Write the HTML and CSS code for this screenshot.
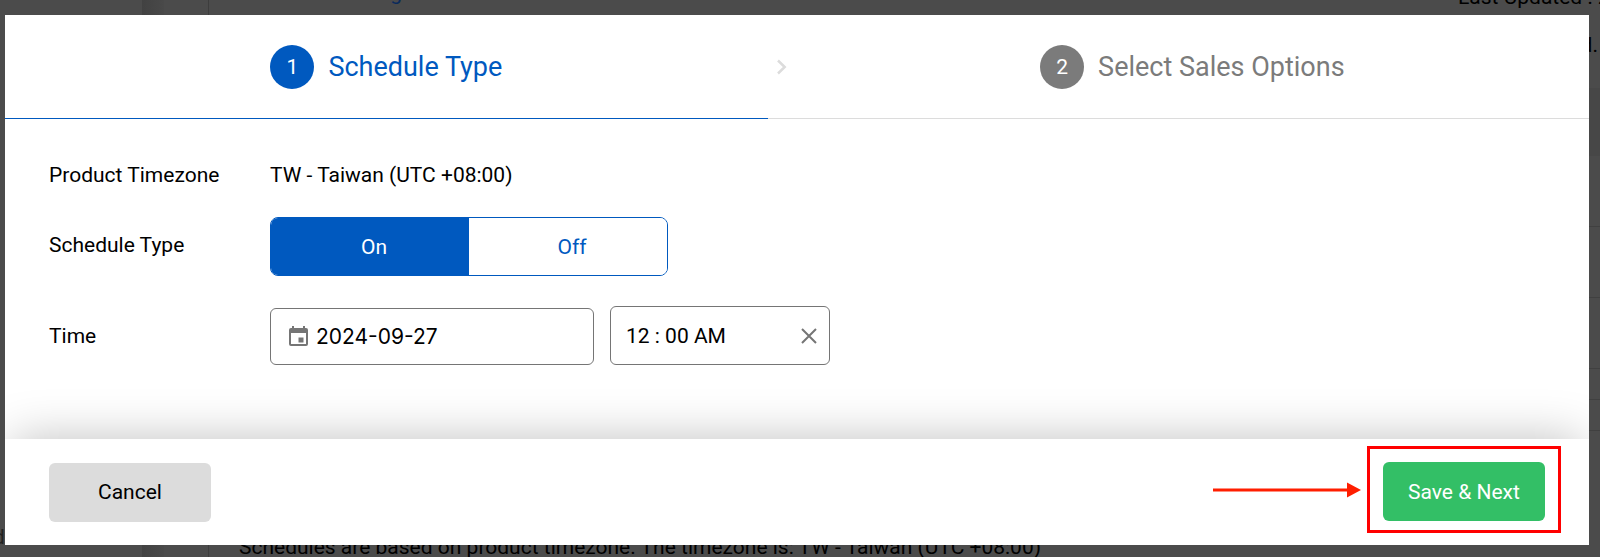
FILE: index.html
```
<!DOCTYPE html>
<html lang="en">
<head>
    <meta charset="UTF-8">
    <meta name="viewport" content="width=device-width, initial-scale=1.0">
    <title>Schedule</title>
    <link rel="stylesheet" href="styles.css">
</head>
<body>
    <!-- Page behind the dialog -->
    <div class="page" aria-hidden="true">
        <div class="sidebar"><span>d</span></div>
        <div class="gutter"></div>
        <div class="content">
            <div class="content-head">
                <span class="page-link">Pricing</span>
                <span class="updated">Last Updated : 2024</span>
            </div>
            <p class="notice">d.</p>
            <div class="rows">
                <div class="head-row"></div>
                <div class="tall-row"></div>
                <div class="tall-row"></div>
                <div class="tall-row"></div>
                <div class="short-row"></div>
                <div class="short-row"></div>
            </div>
            <p class="hint">Schedules are based on product timezone. The timezone is: TW - Taiwan (UTC +08:00)</p>
        </div>
    </div>

    <div class="overlay">
        <form class="modal" role="dialog" aria-label="Schedule">
            <!-- Steps -->
            <div class="steps">
                <div class="step active">
                    <span class="number">1</span>
                    <span>Schedule Type</span>
                </div>
                <div class="separator">
                    <svg width="10" height="16" viewBox="0 0 10 16" fill="none" stroke="#dcdcdc" stroke-width="2.500"><path d="M1 1.500 7.700 8 1 14.500"/></svg>
                </div>
                <div class="step">
                    <span class="number">2</span>
                    <span>Select Sales Options</span>
                </div>
            </div>

            <!-- Fields -->
            <div class="fields">
                <span>Product Timezone</span>
                <span>TW - Taiwan (UTC +08:00)</span>

                <span id="typeLabel" class="type-label">Schedule Type</span>
                <div class="toggle" role="group" aria-labelledby="typeLabel">
                    <button type="button" class="selected" aria-pressed="true">On</button>
                    <button type="button" aria-pressed="false">Off</button>
                </div>

                <label for="date">Time</label>
                <div class="time-fields">
                    <div class="date-box">
                        <svg width="19" height="21" viewBox="0 0 19 21" fill="#757575"><path fill-rule="evenodd" d="M3 0h2v2h9V0h2v2h1a2 2 0 0 1 2 2v14a2 2 0 0 1-2 2H2a2 2 0 0 1-2-2V4a2 2 0 0 1 2-2h1zM2 7v11h15V7z"/><path d="M9.500 11.500h5v5h-5z"/></svg>
                        <input type="text" id="date" value="2024-09-27">
                    </div>
                    <div class="time-box">
                        <input type="text" id="time" aria-label="Time of day" value="12 : 00 AM">
                        <button type="button" class="clear" aria-label="Clear time">
                            <svg width="16" height="16" viewBox="0 0 16 16" stroke="#757575" stroke-width="2"><path d="M1 1 15 15M15 1 1 15"/></svg>
                        </button>
                    </div>
                </div>
            </div>

            <!-- Actions -->
            <div class="footer">
                <button type="button" class="button cancel">Cancel</button>
                <div class="pointer">
                    <svg width="148" height="16" viewBox="0 0 148 16" fill="#ff1e00"><path d="M0 6.500h134V0.500l14 7.500-14 7.500V9.500H0z"/></svg>
                    <div class="highlight">
                        <button type="submit" class="button save">Save &amp; Next</button>
                    </div>
                </div>
            </div>
        </form>
    </div>
</body>
</html>
```
FILE: styles.css
```
* {
    box-sizing: border-box;
}

body {
    margin: 0;
    height: 100vh;
    overflow: hidden;
    font-family: Roboto, Arial, sans-serif;
    font-size: 21px;
    line-height: 24px;
    color: #000;
}

button,
input {
    font: inherit;
    color: inherit;
}

p {
    margin: 0;
}

/* Page behind the dialog */
.page {
    display: flex;
    height: 100vh;
    background-color: #4b4b4b;
}

.sidebar {
    display: flex;
    align-items: flex-end;
    justify-content: flex-start;
    width: 142px;
    padding-bottom: 8px;
    color: #222;
}

.sidebar span {
    margin-left: -7px;
}

.gutter {
    width: 22px;
    background: linear-gradient(to right, #424242, #494949);
}

.content {
    flex: 1;
    min-width: 0;
    display: flex;
    flex-direction: column;
    margin-left: 44px;
    border-left: 1px solid #3d3d3d;
}

.content-head {
    display: flex;
    align-items: flex-end;
    justify-content: space-between;
    height: 24px;
    margin-top: -15px;
    padding-left: 128px;
    white-space: nowrap;
}

.updated {
    flex: 0 0 142px;
    min-width: 0;
}

.page-link {
    padding-bottom: 4px;
    color: #0a2a5c;
}

.notice {
    margin-top: 24px;
    padding-right: 2px;
    text-align: right;
}

.rows {
    margin-top: 31px;
}

.head-row {
    height: 68px;
    background-color: #474747;
}

.tall-row {
    height: 71px;
    border-bottom: 1px solid #404040;
}

.short-row {
    height: 31px;
    border-bottom: 1px solid #404040;
}

.hint {
    margin-top: auto;
    padding-left: 30px;
    margin-bottom: -2px;
    white-space: nowrap;
}

/* Dialog */
.overlay {
    position: fixed;
    inset: 0;
    padding: 15px 11px 12px 5px;
}

.modal {
    display: flex;
    flex-direction: column;
    height: 100%;
    background-color: #fff;
    overflow: hidden;
}

.steps {
    display: grid;
    grid-template-columns: 25fr 28px 26fr;
    height: 104px;
    color: #7b7b7b;
    font-size: 27px;
}

.step {
    display: flex;
    align-items: center;
    justify-content: center;
    gap: 14px;
    border-bottom: 1px solid #dcdcdc;
}

.step.active {
    color: #0059bf;
    border-color: #0059bf;
}

.number {
    display: flex;
    align-items: center;
    justify-content: center;
    width: 44px;
    height: 44px;
    border-radius: 50%;
    background-color: #7b7b7b;
    color: #fff;
    font-size: 21px;
}

.active .number {
    background-color: #0059bf;
}

.separator {
    display: flex;
    align-items: center;
    justify-content: center;
    border-bottom: 1px solid #dcdcdc;
}

.fields {
    flex: 1;
    display: grid;
    grid-template-columns: 221px 1fr;
    align-items: center;
    align-content: start;
    row-gap: 30px;
    padding: 44px;
}

.type-label {
    padding-bottom: 4px;
}

.toggle {
    display: flex;
    width: 398px;
    height: 59px;
    border: 1px solid #0059bf;
    border-radius: 8px;
    overflow: hidden;
}

.toggle button {
    flex: 1;
    padding: 0 0 0 8px;
    border: none;
    background-color: #fff;
    color: #0059bf;
}

.toggle .selected {
    background-color: #0059bf;
    color: #fff;
}

.time-fields {
    display: flex;
    align-items: flex-end;
    gap: 16px;
}

.date-box,
.time-box {
    display: flex;
    align-items: center;
    height: 57px;
    border: 1px solid #757575;
    border-radius: 6px;
}

.date-box {
    gap: 8px;
    width: 324px;
    padding: 0 18px;
    font-family: Inter, sans-serif;
}

.time-box {
    width: 220px;
    height: 59px;
    padding: 0 12px 0 15px;
}

.date-box input,
.time-box input {
    flex: 1;
    min-width: 0;
    padding: 0;
    border: none;
    outline: none;
    background: none;
}

.clear {
    display: flex;
    padding: 0;
    border: none;
    background: none;
}

.footer {
    display: flex;
    align-items: center;
    justify-content: space-between;
    height: 106px;
    padding: 0 28px 0 44px;
    background-color: #fff;
    box-shadow: 0 -8px 48px -8px rgba(0, 0, 0, 0.25);
}

.button {
    width: 162px;
    height: 59px;
    border: none;
    border-radius: 6px;
}

.cancel {
    background-color: #dcdcdc;
}

.save {
    display: block;
    background-color: #33bf66;
    color: #fff;
}

/* Arrow and frame round the save button */
.pointer {
    display: flex;
    align-items: center;
    gap: 6px;
    margin-bottom: 5px;
}

.highlight {
    padding: 13px 13px 9px;
    border: 3px solid #ff0000;
}
```
